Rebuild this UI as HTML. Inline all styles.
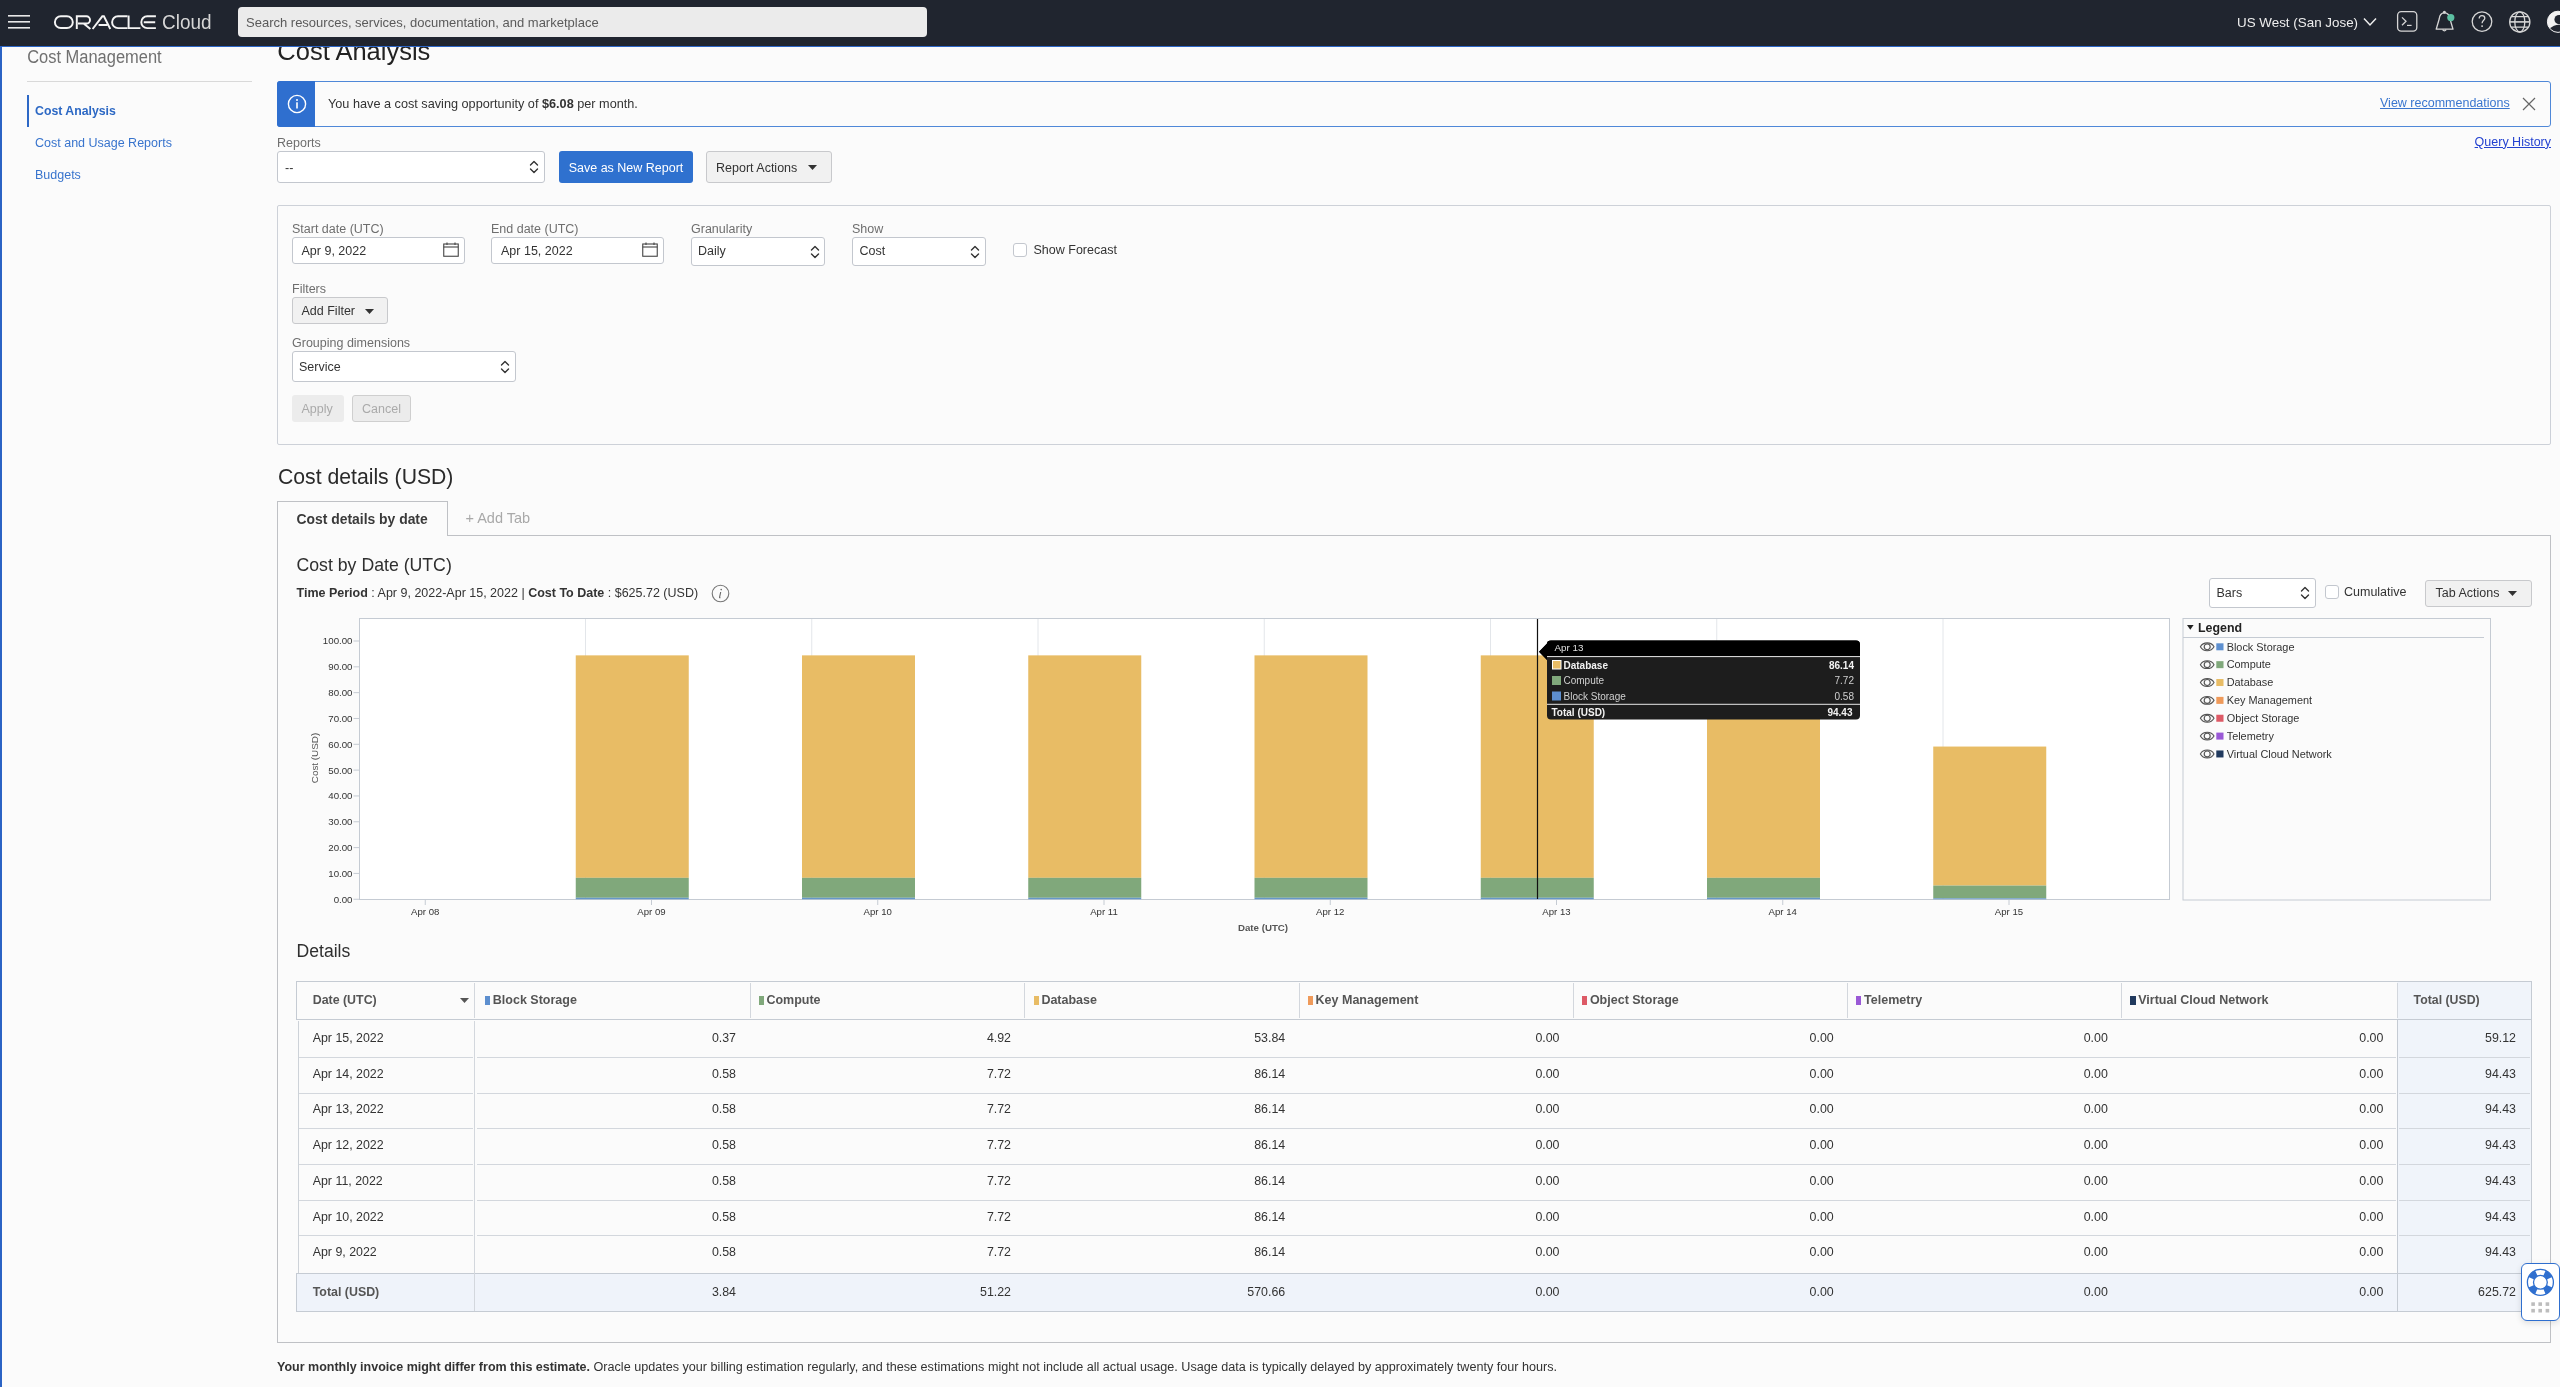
<!DOCTYPE html><html><head><meta charset="utf-8"><style>
*{box-sizing:border-box;margin:0;padding:0}
html,body{width:2560px;height:1387px;overflow:hidden;background:#fbfbfb;font-family:"Liberation Sans",sans-serif;color:#333;font-size:12.5px}
.a{position:absolute;white-space:nowrap;line-height:1}
.lbl{color:#6e6e6e;font-size:12.5px}
.box{position:absolute}
.inp{position:absolute;background:#fff;border:1px solid #c3c7ce;border-radius:3px}
.btn{position:absolute;background:#f1f1f1;border:1px solid #c8c9cc;border-radius:3px}
.t{position:absolute;white-space:nowrap;line-height:1}
#root{position:absolute;left:0;top:0;width:2560px;height:1387px;overflow:hidden;will-change:transform;background:#fbfbfb}
</style></head><body><div id="root">
<div class="t" style="left:277.3px;top:39.45px;font-size:25.5px;color:#222;font-weight:normal;">Cost Analysis</div>
<div class="box" style="left:0px;top:0px;width:2560px;height:46px;background:#20252f"></div>
<div class="box" style="left:0px;top:46px;width:2560px;height:1px;background:#2c66c6"></div>
<div class="box" style="left:0px;top:46px;width:2px;height:1341px;background:#2b63c4"></div>
<svg class="box" style="left:8px;top:15px" width="22" height="14" viewBox="0 0 22 14"><rect x="0" y="0" width="22" height="1.6" fill="#e8e8e8"/><rect x="0" y="6" width="22" height="1.6" fill="#e8e8e8"/><rect x="0" y="12" width="22" height="1.6" fill="#e8e8e8"/></svg>
<svg class="box" style="left:48px;top:8px" width="170" height="30" viewBox="48 8 170 30"><g fill="none" stroke="#f4f4f4" stroke-width="1.95" stroke-linejoin="miter"><rect x="54.9" y="16.3" width="17.9" height="11.8" rx="5.9"/><path d="M76.8 29 L76.8 16.3 L86.4 16.3 A3.6 3.6 0 0 1 86.4 23.5 L78 23.5 M83.6 23.5 L90.4 29"/><path d="M92.6 29 L102.3 16.3 L103.9 16.3 L110.3 29 M98.6 25 L107.3 25"/><path d="M127.5 16.3 L118 16.3 A5.9 5.9 0 0 0 118 28.1 L127.5 28.1"/><path d="M128.6 15.5 L128.6 28.1 L140.4 28.1"/><path d="M155.9 16.3 L147.2 16.3 A5.9 5.9 0 0 0 147.2 28.1 L155.9 28.1 M143.8 22.2 L155.2 22.2"/></g><text x="162" y="28.9" font-family="Liberation Sans" font-size="20" fill="#d6d6d6" textLength="49.5" lengthAdjust="spacingAndGlyphs">Cloud</text></svg>
<div class="box" style="left:238px;top:7px;width:689px;height:30px;background:#ebebeb;border-radius:4px"></div>
<div class="t" style="left:246px;top:15.50px;font-size:13px;color:#5a5a5a;font-weight:normal;">Search resources, services, documentation, and marketplace</div>
<div class="t" style="left:2237px;top:16.10px;font-size:13.4px;color:#eeeeee;font-weight:normal;">US West (San Jose)</div>
<svg class="box" style="left:2362px;top:16px" width="16" height="12" viewBox="0 0 16 12"><path d="M2 2.5 L8 9 L14 2.5" fill="none" stroke="#eee" stroke-width="1.5"/></svg>
<svg class="box" style="left:2390px;top:4px" width="170" height="36" viewBox="2390 4 170 36"><g fill="none" stroke="#d6d6d6" stroke-width="1.3"><rect x="2397.6" y="11.6" width="19.2" height="19.6" rx="3.6"/><path d="M2402 17.4 L2406 21.3 L2402 25.2"/><path d="M2407 25.4 L2411.6 25.4" stroke-width="1.2"/><path d="M2444.4 12.6 C2441 13 2439.5 15.5 2439.2 19 L2436.2 29.2 L2453 29.2 L2450 19 C2449.6 15.5 2447.8 13 2444.4 12.6 Z" stroke-linejoin="round"/><path d="M2442.6 29.6 Q2444.4 32 2446.2 29.6"/><circle cx="2444.4" cy="12.2" r="0.9"/><circle cx="2482" cy="21.6" r="9.8"/><path d="M2479.2 18.6 C2479.2 16.6 2480.5 15.6 2482 15.6 C2483.6 15.6 2484.8 16.7 2484.8 18.2 C2484.8 20.2 2482.1 20.4 2482.1 23.2"/><circle cx="2519.8" cy="21.9" r="10.1"/><ellipse cx="2519.8" cy="21.9" rx="5" ry="10.1"/><path d="M2509.7 21.9 L2529.9 21.9" stroke-width="1.6"/><path d="M2511.2 16.6 L2528.4 16.6 M2511.2 27.2 L2528.4 27.2"/></g><circle cx="2482.1" cy="26.1" r="0.95" fill="#d6d6d6"/><circle cx="2450.8" cy="17.6" r="3.6" fill="#5cc0a2"/><circle cx="2558" cy="21.8" r="10.6" fill="#f2f2f2"/><circle cx="2559" cy="19.6" r="4.6" fill="#20252f"/><path d="M2549 29 Q2559 20.5 2569 29 L2569 33 L2549 33 Z" fill="#20252f"/><circle cx="2558" cy="21.8" r="10.6" fill="none" stroke="#f2f2f2" stroke-width="1"/></svg>
<svg class="box" style="left:20px;top:44px" width="160" height="28" viewBox="20 44 160 28"><text x="27.2" y="62.8" font-family="Liberation Sans" font-size="17.6" fill="#707070" textLength="134.5" lengthAdjust="spacingAndGlyphs">Cost Management</text></svg>
<div class="box" style="left:27px;top:81px;width:225px;height:1px;background:#d9d9d9"></div>
<div class="box" style="left:27px;top:95px;width:2px;height:32px;background:#2d68c6"></div>
<div class="t" style="left:35px;top:104.85px;font-size:12.3px;color:#2c68c4;font-weight:bold;">Cost Analysis</div>
<div class="t" style="left:35px;top:137.05px;font-size:12.5px;color:#3874cd;font-weight:normal;">Cost and Usage Reports</div>
<div class="t" style="left:35px;top:169.05px;font-size:12.5px;color:#3874cd;font-weight:normal;">Budgets</div>
<div class="box" style="left:277px;top:81px;width:2274px;height:46px;border:1.5px solid #4f88d8;border-radius:3px"></div>
<div class="box" style="left:277px;top:81px;width:38px;height:46px;background:#2f6fcf;border-radius:3px 0 0 3px"></div>
<svg class="box" style="left:287px;top:94px" width="20" height="20" viewBox="0 0 20 20"><circle cx="10" cy="10" r="8.6" fill="none" stroke="#fff" stroke-width="1.4"/><rect x="9.2" y="8.3" width="1.6" height="6.2" fill="#fff"/><circle cx="10" cy="5.9" r="1" fill="#fff"/></svg>
<div class="t" style="left:328px;top:97.65px;font-size:12.7px;color:#333;font-weight:normal;">You have a cost saving opportunity of <b>$6.08</b> per month.</div>
<div class="t" style="left:2380px;top:97.25px;font-size:12.5px;color:#3a76cf;font-weight:normal;text-decoration:underline">View recommendations</div>
<svg class="box" style="left:2522px;top:97px" width="14" height="14" viewBox="0 0 14 14"><path d="M1 1 L13 13 M13 1 L1 13" stroke="#666" stroke-width="1.2"/></svg>
<div class="t" style="left:277px;top:137.05px;font-size:12.5px;color:#6e6e6e;font-weight:normal;">Reports</div>
<div class="t" style="right:9px;top:135.75px;font-size:12.5px;color:#2442d0;font-weight:normal;text-align:right;text-decoration:underline">Query History</div>
<div class="inp" style="left:277px;top:151px;width:268px;height:32px"></div>
<div class="t" style="left:285px;top:161.75px;font-size:12.5px;color:#333;font-weight:normal;">--</div>
<svg class="box" style="left:529px;top:160px" width="10" height="14" viewBox="0 0 10 14"><path d="M1.5 5 L5 1.5 L8.5 5 M1.5 9 L5 12.5 L8.5 9" fill="none" stroke="#333" stroke-width="1.4" stroke-linecap="round" stroke-linejoin="round"/></svg>
<div class="box" style="left:559px;top:151px;width:134px;height:32px;background:#2f71cf;border-radius:3px"></div>
<div class="t" style="left:568.7px;top:161.75px;font-size:12.5px;color:#fff;font-weight:normal;">Save as New Report</div>
<div class="btn" style="left:706px;top:151px;width:126px;height:32px"></div>
<div class="t" style="left:716px;top:161.75px;font-size:12.5px;color:#333;font-weight:normal;">Report Actions</div>
<svg class="box" style="left:808px;top:165px" width="9" height="5" viewBox="0 0 9 5"><path d="M0 0 L9 0 L4.5 5 Z" fill="#333"/></svg>
<div class="box" style="left:277px;top:205px;width:2274px;height:240px;border:1px solid #cdd1d8;border-radius:2px"></div>
<div class="t" style="left:292px;top:223.05px;font-size:12.5px;color:#6e6e6e;font-weight:normal;">Start date (UTC)</div>
<div class="t" style="left:491px;top:223.05px;font-size:12.5px;color:#6e6e6e;font-weight:normal;">End date (UTC)</div>
<div class="t" style="left:691px;top:223.05px;font-size:12.5px;color:#6e6e6e;font-weight:normal;">Granularity</div>
<div class="t" style="left:852px;top:223.05px;font-size:12.5px;color:#6e6e6e;font-weight:normal;">Show</div>
<div class="inp" style="left:292px;top:237px;width:173px;height:27px"></div>
<div class="t" style="left:301.5px;top:244.75px;font-size:12.5px;color:#333;font-weight:normal;">Apr 9, 2022</div>
<svg class="box" style="left:443px;top:242px" width="16" height="15" viewBox="0 0 16 15"><rect x="0.75" y="2" width="14.5" height="12.25" fill="none" stroke="#444" stroke-width="1.1"/><line x1="0.75" y1="5" x2="15.25" y2="5" stroke="#444" stroke-width="1.1"/><line x1="4" y1="0.5" x2="4" y2="3" stroke="#444" stroke-width="1.1"/><line x1="12" y1="0.5" x2="12" y2="3" stroke="#444" stroke-width="1.1"/></svg>
<div class="inp" style="left:491px;top:237px;width:173px;height:27px"></div>
<div class="t" style="left:501px;top:244.75px;font-size:12.5px;color:#333;font-weight:normal;">Apr 15, 2022</div>
<svg class="box" style="left:642px;top:242px" width="16" height="15" viewBox="0 0 16 15"><rect x="0.75" y="2" width="14.5" height="12.25" fill="none" stroke="#444" stroke-width="1.1"/><line x1="0.75" y1="5" x2="15.25" y2="5" stroke="#444" stroke-width="1.1"/><line x1="4" y1="0.5" x2="4" y2="3" stroke="#444" stroke-width="1.1"/><line x1="12" y1="0.5" x2="12" y2="3" stroke="#444" stroke-width="1.1"/></svg>
<div class="inp" style="left:691px;top:237px;width:134px;height:29px"></div>
<div class="t" style="left:698px;top:244.75px;font-size:12.5px;color:#333;font-weight:normal;">Daily</div>
<svg class="box" style="left:809.5px;top:245px" width="10" height="14" viewBox="0 0 10 14"><path d="M1.5 5 L5 1.5 L8.5 5 M1.5 9 L5 12.5 L8.5 9" fill="none" stroke="#333" stroke-width="1.4" stroke-linecap="round" stroke-linejoin="round"/></svg>
<div class="inp" style="left:852px;top:237px;width:134px;height:29px"></div>
<div class="t" style="left:859.5px;top:244.75px;font-size:12.5px;color:#333;font-weight:normal;">Cost</div>
<svg class="box" style="left:970px;top:245px" width="10" height="14" viewBox="0 0 10 14"><path d="M1.5 5 L5 1.5 L8.5 5 M1.5 9 L5 12.5 L8.5 9" fill="none" stroke="#333" stroke-width="1.4" stroke-linecap="round" stroke-linejoin="round"/></svg>
<div class="box" style="left:1013px;top:243px;width:14px;height:14px;border:1px solid #c3c7ce;border-radius:3px;background:#fff"></div>
<div class="t" style="left:1033.5px;top:243.75px;font-size:12.5px;color:#333;font-weight:normal;">Show Forecast</div>
<div class="t" style="left:292px;top:283.25px;font-size:12.5px;color:#6e6e6e;font-weight:normal;">Filters</div>
<div class="btn" style="left:292px;top:297px;width:96px;height:27px"></div>
<div class="t" style="left:301.5px;top:305.05px;font-size:12.5px;color:#333;font-weight:normal;">Add Filter</div>
<svg class="box" style="left:364.5px;top:308.5px" width="9" height="5" viewBox="0 0 9 5"><path d="M0 0 L9 0 L4.5 5 Z" fill="#333"/></svg>
<div class="t" style="left:292px;top:336.75px;font-size:12.5px;color:#6e6e6e;font-weight:normal;">Grouping dimensions</div>
<div class="inp" style="left:292px;top:351px;width:224px;height:31px"></div>
<div class="t" style="left:299px;top:360.75px;font-size:12.5px;color:#333;font-weight:normal;">Service</div>
<svg class="box" style="left:499.5px;top:359.5px" width="10" height="14" viewBox="0 0 10 14"><path d="M1.5 5 L5 1.5 L8.5 5 M1.5 9 L5 12.5 L8.5 9" fill="none" stroke="#333" stroke-width="1.4" stroke-linecap="round" stroke-linejoin="round"/></svg>
<div class="box" style="left:292px;top:395px;width:52px;height:27px;background:#ececec;border-radius:3px"></div>
<div class="t" style="left:301.5px;top:402.75px;font-size:12.5px;color:#aaaaaa;font-weight:normal;">Apply</div>
<div class="box" style="left:352px;top:395px;width:59px;height:27px;background:#ececec;border:1px solid #cfcfcf;border-radius:3px"></div>
<div class="t" style="left:362px;top:402.75px;font-size:12.5px;color:#aaaaaa;font-weight:normal;">Cancel</div>
<div class="t" style="left:278px;top:466.20px;font-size:21.2px;color:#2a2a2a;font-weight:normal;">Cost details (USD)</div>
<div class="box" style="left:277px;top:535px;width:2274px;height:808px;border:1px solid #bfc1c5;border-top:none"></div>
<div class="box" style="left:447px;top:535px;width:2104px;height:1px;background:#bfc1c5"></div>
<div class="box" style="left:277px;top:501px;width:171px;height:35px;border:1px solid #bfc1c5;border-bottom:none;background:#fbfbfb"></div>
<div class="t" style="left:296.5px;top:513.05px;font-size:13.9px;color:#3a3a3a;font-weight:bold;letter-spacing:0px">Cost details by date</div>
<div class="t" style="left:465.5px;top:510.75px;font-size:14.5px;color:#a9a9a9;font-weight:normal;">+ Add Tab</div>
<div class="t" style="left:296.5px;top:556.65px;font-size:17.7px;color:#2f2f2f;font-weight:normal;">Cost by Date (UTC)</div>
<div class="t" style="left:296.5px;top:586.75px;font-size:12.5px;color:#333;font-weight:normal;"><b>Time Period</b> : Apr 9, 2022-Apr 15, 2022 | <b>Cost To Date</b> : $625.72 (USD)</div>
<svg class="box" style="left:711px;top:584px" width="19" height="19" viewBox="0 0 19 19"><circle cx="9.5" cy="9.5" r="8.3" fill="none" stroke="#777" stroke-width="1.1"/><path d="M9.7 8 L8.6 13.2 Q8.5 14 9.4 13.6" fill="none" stroke="#666" stroke-width="1.1"/><circle cx="10.2" cy="5.6" r="0.8" fill="#666"/></svg>
<div class="inp" style="left:2209px;top:578px;width:107px;height:30px"></div>
<div class="t" style="left:2216.5px;top:586.75px;font-size:12.5px;color:#333;font-weight:normal;">Bars</div>
<svg class="box" style="left:2299.5px;top:585.5px" width="10" height="14" viewBox="0 0 10 14"><path d="M1.5 5 L5 1.5 L8.5 5 M1.5 9 L5 12.5 L8.5 9" fill="none" stroke="#333" stroke-width="1.4" stroke-linecap="round" stroke-linejoin="round"/></svg>
<div class="box" style="left:2325px;top:585px;width:14px;height:14px;border:1px solid #c3c7ce;border-radius:3px;background:#fff"></div>
<div class="t" style="left:2344px;top:586.25px;font-size:12.5px;color:#333;font-weight:normal;">Cumulative</div>
<div class="btn" style="left:2425px;top:580px;width:107px;height:27px"></div>
<div class="t" style="left:2435.5px;top:586.75px;font-size:12.5px;color:#333;font-weight:normal;">Tab Actions</div>
<svg class="box" style="left:2508px;top:591px" width="9" height="5" viewBox="0 0 9 5"><path d="M0 0 L9 0 L4.5 5 Z" fill="#333"/></svg>
<svg class="box" style="left:0;top:0" width="2560" height="1387" viewBox="0 0 2560 1387">
<rect x="359.5" y="618.5" width="1810" height="281" fill="#fff" stroke="#c5cbd3" stroke-width="1"/>
<line x1="585.50" y1="619" x2="585.50" y2="899" stroke="#e3e6ea" stroke-width="1"/>
<line x1="811.75" y1="619" x2="811.75" y2="899" stroke="#e3e6ea" stroke-width="1"/>
<line x1="1038.00" y1="619" x2="1038.00" y2="899" stroke="#e3e6ea" stroke-width="1"/>
<line x1="1264.25" y1="619" x2="1264.25" y2="899" stroke="#e3e6ea" stroke-width="1"/>
<line x1="1490.50" y1="619" x2="1490.50" y2="899" stroke="#e3e6ea" stroke-width="1"/>
<line x1="1716.75" y1="619" x2="1716.75" y2="899" stroke="#e3e6ea" stroke-width="1"/>
<line x1="1943.00" y1="619" x2="1943.00" y2="899" stroke="#e3e6ea" stroke-width="1"/>
<line x1="353.5" y1="899.25" x2="359.5" y2="899.25" stroke="#c5cbd3" stroke-width="1"/>
<text x="352.5" y="902.65" text-anchor="end" font-family="Liberation Sans" font-size="9.7" fill="#333">0.00</text>
<line x1="353.5" y1="873.42" x2="359.5" y2="873.42" stroke="#c5cbd3" stroke-width="1"/>
<text x="352.5" y="876.82" text-anchor="end" font-family="Liberation Sans" font-size="9.7" fill="#333">10.00</text>
<line x1="353.5" y1="847.60" x2="359.5" y2="847.60" stroke="#c5cbd3" stroke-width="1"/>
<text x="352.5" y="851.00" text-anchor="end" font-family="Liberation Sans" font-size="9.7" fill="#333">20.00</text>
<line x1="353.5" y1="821.77" x2="359.5" y2="821.77" stroke="#c5cbd3" stroke-width="1"/>
<text x="352.5" y="825.17" text-anchor="end" font-family="Liberation Sans" font-size="9.7" fill="#333">30.00</text>
<line x1="353.5" y1="795.95" x2="359.5" y2="795.95" stroke="#c5cbd3" stroke-width="1"/>
<text x="352.5" y="799.35" text-anchor="end" font-family="Liberation Sans" font-size="9.7" fill="#333">40.00</text>
<line x1="353.5" y1="770.12" x2="359.5" y2="770.12" stroke="#c5cbd3" stroke-width="1"/>
<text x="352.5" y="773.52" text-anchor="end" font-family="Liberation Sans" font-size="9.7" fill="#333">50.00</text>
<line x1="353.5" y1="744.30" x2="359.5" y2="744.30" stroke="#c5cbd3" stroke-width="1"/>
<text x="352.5" y="747.70" text-anchor="end" font-family="Liberation Sans" font-size="9.7" fill="#333">60.00</text>
<line x1="353.5" y1="718.48" x2="359.5" y2="718.48" stroke="#c5cbd3" stroke-width="1"/>
<text x="352.5" y="721.88" text-anchor="end" font-family="Liberation Sans" font-size="9.7" fill="#333">70.00</text>
<line x1="353.5" y1="692.65" x2="359.5" y2="692.65" stroke="#c5cbd3" stroke-width="1"/>
<text x="352.5" y="696.05" text-anchor="end" font-family="Liberation Sans" font-size="9.7" fill="#333">80.00</text>
<line x1="353.5" y1="666.83" x2="359.5" y2="666.83" stroke="#c5cbd3" stroke-width="1"/>
<text x="352.5" y="670.23" text-anchor="end" font-family="Liberation Sans" font-size="9.7" fill="#333">90.00</text>
<line x1="353.5" y1="641.00" x2="359.5" y2="641.00" stroke="#c5cbd3" stroke-width="1"/>
<text x="352.5" y="644.40" text-anchor="end" font-family="Liberation Sans" font-size="9.7" fill="#333">100.00</text>
<text transform="translate(317.6,758) rotate(-90)" text-anchor="middle" font-family="Liberation Sans" font-size="9.9" fill="#555">Cost (USD)</text>
<line x1="425.25" y1="899.5" x2="425.25" y2="905" stroke="#c5cbd3" stroke-width="1"/>
<text x="425.25" y="914.5" text-anchor="middle" font-family="Liberation Sans" font-size="9.6" fill="#333">Apr 08</text>
<line x1="651.50" y1="899.5" x2="651.50" y2="905" stroke="#c5cbd3" stroke-width="1"/>
<text x="651.50" y="914.5" text-anchor="middle" font-family="Liberation Sans" font-size="9.6" fill="#333">Apr 09</text>
<line x1="877.75" y1="899.5" x2="877.75" y2="905" stroke="#c5cbd3" stroke-width="1"/>
<text x="877.75" y="914.5" text-anchor="middle" font-family="Liberation Sans" font-size="9.6" fill="#333">Apr 10</text>
<line x1="1104.00" y1="899.5" x2="1104.00" y2="905" stroke="#c5cbd3" stroke-width="1"/>
<text x="1104.00" y="914.5" text-anchor="middle" font-family="Liberation Sans" font-size="9.6" fill="#333">Apr 11</text>
<line x1="1330.25" y1="899.5" x2="1330.25" y2="905" stroke="#c5cbd3" stroke-width="1"/>
<text x="1330.25" y="914.5" text-anchor="middle" font-family="Liberation Sans" font-size="9.6" fill="#333">Apr 12</text>
<line x1="1556.50" y1="899.5" x2="1556.50" y2="905" stroke="#c5cbd3" stroke-width="1"/>
<text x="1556.50" y="914.5" text-anchor="middle" font-family="Liberation Sans" font-size="9.6" fill="#333">Apr 13</text>
<line x1="1782.75" y1="899.5" x2="1782.75" y2="905" stroke="#c5cbd3" stroke-width="1"/>
<text x="1782.75" y="914.5" text-anchor="middle" font-family="Liberation Sans" font-size="9.6" fill="#333">Apr 14</text>
<line x1="2009.00" y1="899.5" x2="2009.00" y2="905" stroke="#c5cbd3" stroke-width="1"/>
<text x="2009.00" y="914.5" text-anchor="middle" font-family="Liberation Sans" font-size="9.6" fill="#333">Apr 15</text>
<text x="1263" y="930.5" text-anchor="middle" font-family="Liberation Sans" font-size="9.7" font-weight="bold" fill="#555">Date (UTC)</text>
<rect x="575.75" y="655.36" width="113" height="222.46" fill="#e8bc65"/>
<rect x="575.75" y="877.82" width="113" height="19.94" fill="#80a87b"/>
<rect x="575.75" y="897.75" width="113" height="1.50" fill="#6597c8"/>
<rect x="802.00" y="655.36" width="113" height="222.46" fill="#e8bc65"/>
<rect x="802.00" y="877.82" width="113" height="19.94" fill="#80a87b"/>
<rect x="802.00" y="897.75" width="113" height="1.50" fill="#6597c8"/>
<rect x="1028.25" y="655.36" width="113" height="222.46" fill="#e8bc65"/>
<rect x="1028.25" y="877.82" width="113" height="19.94" fill="#80a87b"/>
<rect x="1028.25" y="897.75" width="113" height="1.50" fill="#6597c8"/>
<rect x="1254.50" y="655.36" width="113" height="222.46" fill="#e8bc65"/>
<rect x="1254.50" y="877.82" width="113" height="19.94" fill="#80a87b"/>
<rect x="1254.50" y="897.75" width="113" height="1.50" fill="#6597c8"/>
<rect x="1480.75" y="655.36" width="113" height="222.46" fill="#e8bc65"/>
<rect x="1480.75" y="877.82" width="113" height="19.94" fill="#80a87b"/>
<rect x="1480.75" y="897.75" width="113" height="1.50" fill="#6597c8"/>
<rect x="1707.00" y="655.36" width="113" height="222.46" fill="#e8bc65"/>
<rect x="1707.00" y="877.82" width="113" height="19.94" fill="#80a87b"/>
<rect x="1707.00" y="897.75" width="113" height="1.50" fill="#6597c8"/>
<rect x="1933.25" y="746.55" width="113" height="139.04" fill="#e8bc65"/>
<rect x="1933.25" y="885.59" width="113" height="12.71" fill="#80a87b"/>
<rect x="1933.25" y="898.29" width="113" height="0.96" fill="#6597c8"/>
<line x1="1537.5" y1="619" x2="1537.5" y2="899" stroke="#111" stroke-width="1.2"/>
<path d="M1551 640.5 L1856 640.5 Q1860 640.5 1860 644.5 L1860 715.5 Q1860 719.5 1856 719.5 L1551 719.5 Q1547 719.5 1547 715.5 L1547 660 L1539 651.8 L1547 643.5 Q1547 640.5 1551 640.5 Z" fill="#1d1d1d"/>
<path d="M1551 640.5 L1856 640.5 Q1860 640.5 1860 644.5 L1860 656 L1547 656 L1547 660 L1539 651.8 L1547 643.5 Q1547 640.5 1551 640.5 Z" fill="#000"/>
<line x1="1547" y1="656.6" x2="1860" y2="656.6" stroke="#e8e8e8" stroke-width="1"/>
<line x1="1547" y1="704.3" x2="1860" y2="704.3" stroke="#e8e8e8" stroke-width="1"/>
<text x="1554.5" y="651.3" font-family="Liberation Sans" font-size="9.8" fill="#e0e0e0">Apr 13</text>
<rect x="1552.5" y="660.5" width="8.5" height="8.5" fill="#e8bc65" stroke="#fff" stroke-width="1"/>
<text x="1563.5" y="668.5" font-family="Liberation Sans" font-size="10" font-weight="bold" fill="#f2f2f2">Database</text>
<text x="1854" y="668.5" text-anchor="end" font-family="Liberation Sans" font-size="10" font-weight="bold" fill="#f2f2f2">86.14</text>
<rect x="1552" y="676" width="9" height="9" fill="#80a87b"/>
<text x="1563.5" y="684" font-family="Liberation Sans" font-size="10" fill="#d0d0d0">Compute</text>
<text x="1854" y="684" text-anchor="end" font-family="Liberation Sans" font-size="10" fill="#d0d0d0">7.72</text>
<rect x="1552" y="691.5" width="9" height="9" fill="#5d8fcf"/>
<text x="1563.5" y="699.6" font-family="Liberation Sans" font-size="10" fill="#d0d0d0">Block Storage</text>
<text x="1854" y="699.6" text-anchor="end" font-family="Liberation Sans" font-size="10" fill="#d0d0d0">0.58</text>
<text x="1551.5" y="715.8" font-family="Liberation Sans" font-size="10" font-weight="bold" fill="#f2f2f2">Total (USD)</text>
<text x="1852.5" y="715.8" text-anchor="end" font-family="Liberation Sans" font-size="10" font-weight="bold" fill="#f2f2f2">94.43</text>
<rect x="2183" y="618.5" width="307.5" height="281.5" fill="#fbfbfb" stroke="#c5cbd3" stroke-width="1"/>
<path d="M2187 625 L2193.6 625 L2190.3 629.8 Z" fill="#222"/>
<text x="2198" y="631.8" font-family="Liberation Sans" font-size="12.4" font-weight="bold" fill="#222">Legend</text>
<line x1="2183" y1="637.5" x2="2484" y2="637.5" stroke="#c5cbd3" stroke-width="1"/>
<g transform="translate(2207.2,646.80)"><path d="M-6.8 0 C-4 -5.2 4 -5.2 6.8 0 C4 5.2 -4 5.2 -6.8 0 Z" fill="none" stroke="#555" stroke-width="1.1"/><circle cx="0" cy="0" r="3" fill="none" stroke="#555" stroke-width="1.2"/></g>
<rect x="2216.3" y="643.30" width="7.2" height="7" fill="#5d8fcf"/>
<text x="2226.7" y="650.60" font-family="Liberation Sans" font-size="10.9" fill="#333">Block Storage</text>
<g transform="translate(2207.2,664.66)"><path d="M-6.8 0 C-4 -5.2 4 -5.2 6.8 0 C4 5.2 -4 5.2 -6.8 0 Z" fill="none" stroke="#555" stroke-width="1.1"/><circle cx="0" cy="0" r="3" fill="none" stroke="#555" stroke-width="1.2"/></g>
<rect x="2216.3" y="661.16" width="7.2" height="7" fill="#80a87b"/>
<text x="2226.7" y="668.46" font-family="Liberation Sans" font-size="10.9" fill="#333">Compute</text>
<g transform="translate(2207.2,682.52)"><path d="M-6.8 0 C-4 -5.2 4 -5.2 6.8 0 C4 5.2 -4 5.2 -6.8 0 Z" fill="none" stroke="#555" stroke-width="1.1"/><circle cx="0" cy="0" r="3" fill="none" stroke="#555" stroke-width="1.2"/></g>
<rect x="2216.3" y="679.02" width="7.2" height="7" fill="#e8bc65"/>
<text x="2226.7" y="686.32" font-family="Liberation Sans" font-size="10.9" fill="#333">Database</text>
<g transform="translate(2207.2,700.38)"><path d="M-6.8 0 C-4 -5.2 4 -5.2 6.8 0 C4 5.2 -4 5.2 -6.8 0 Z" fill="none" stroke="#555" stroke-width="1.1"/><circle cx="0" cy="0" r="3" fill="none" stroke="#555" stroke-width="1.2"/></g>
<rect x="2216.3" y="696.88" width="7.2" height="7" fill="#ef9a5a"/>
<text x="2226.7" y="704.18" font-family="Liberation Sans" font-size="10.9" fill="#333">Key Management</text>
<g transform="translate(2207.2,718.24)"><path d="M-6.8 0 C-4 -5.2 4 -5.2 6.8 0 C4 5.2 -4 5.2 -6.8 0 Z" fill="none" stroke="#555" stroke-width="1.1"/><circle cx="0" cy="0" r="3" fill="none" stroke="#555" stroke-width="1.2"/></g>
<rect x="2216.3" y="714.74" width="7.2" height="7" fill="#dd5a66"/>
<text x="2226.7" y="722.04" font-family="Liberation Sans" font-size="10.9" fill="#333">Object Storage</text>
<g transform="translate(2207.2,736.10)"><path d="M-6.8 0 C-4 -5.2 4 -5.2 6.8 0 C4 5.2 -4 5.2 -6.8 0 Z" fill="none" stroke="#555" stroke-width="1.1"/><circle cx="0" cy="0" r="3" fill="none" stroke="#555" stroke-width="1.2"/></g>
<rect x="2216.3" y="732.60" width="7.2" height="7" fill="#9a59d6"/>
<text x="2226.7" y="739.90" font-family="Liberation Sans" font-size="10.9" fill="#333">Telemetry</text>
<g transform="translate(2207.2,753.96)"><path d="M-6.8 0 C-4 -5.2 4 -5.2 6.8 0 C4 5.2 -4 5.2 -6.8 0 Z" fill="none" stroke="#555" stroke-width="1.1"/><circle cx="0" cy="0" r="3" fill="none" stroke="#555" stroke-width="1.2"/></g>
<rect x="2216.3" y="750.46" width="7.2" height="7" fill="#213a5e"/>
<text x="2226.7" y="757.76" font-family="Liberation Sans" font-size="10.9" fill="#333">Virtual Cloud Network</text>
</svg>
<div class="t" style="left:296.5px;top:942.70px;font-size:17.6px;color:#2f2f2f;font-weight:normal;">Details</div>
<div class="box" style="left:2397px;top:981px;width:135px;height:292px;background:#f0f4fa"></div>
<div class="box" style="left:296px;top:1273px;width:2236px;height:38px;background:#eff3fa"></div>
<div class="box" style="left:296px;top:981px;width:2236px;height:38.5px;border:1px solid #c5cbd3"></div>
<div class="box" style="left:296px;top:1272.5px;width:2236px;height:39px;border:1px solid #c5cbd3"></div>
<div class="box" style="left:298px;top:1021px;width:1px;height:252px;background:#cdd2d8"></div>
<div class="box" style="left:474px;top:983px;width:1px;height:35px;background:#d3d7dd"></div>
<div class="box" style="left:750px;top:983px;width:1px;height:35px;background:#d3d7dd"></div>
<div class="box" style="left:1024px;top:983px;width:1px;height:35px;background:#d3d7dd"></div>
<div class="box" style="left:1299px;top:983px;width:1px;height:35px;background:#d3d7dd"></div>
<div class="box" style="left:1573px;top:983px;width:1px;height:35px;background:#d3d7dd"></div>
<div class="box" style="left:1847px;top:983px;width:1px;height:35px;background:#d3d7dd"></div>
<div class="box" style="left:2121px;top:983px;width:1px;height:35px;background:#d3d7dd"></div>
<div class="box" style="left:2397px;top:983px;width:1px;height:35px;background:#d3d7dd"></div>
<div class="box" style="left:474px;top:1021px;width:1px;height:290px;background:#d3d7dd"></div>
<div class="box" style="left:2397px;top:1019px;width:1px;height:292px;background:#c5cbd3"></div>
<div class="box" style="left:2531px;top:1019px;width:1px;height:254px;background:#c5cbd3"></div>
<div class="box" style="left:299px;top:1057px;width:174px;height:1.3px;background:#d3d7dd"></div>
<div class="box" style="left:477px;top:1057px;width:1919px;height:1.3px;background:#d3d7dd"></div>
<div class="box" style="left:2399px;top:1057px;width:131px;height:1.3px;background:#d3d7dd"></div>
<div class="box" style="left:299px;top:1093px;width:174px;height:1.3px;background:#d3d7dd"></div>
<div class="box" style="left:477px;top:1093px;width:1919px;height:1.3px;background:#d3d7dd"></div>
<div class="box" style="left:2399px;top:1093px;width:131px;height:1.3px;background:#d3d7dd"></div>
<div class="box" style="left:299px;top:1128px;width:174px;height:1.3px;background:#d3d7dd"></div>
<div class="box" style="left:477px;top:1128px;width:1919px;height:1.3px;background:#d3d7dd"></div>
<div class="box" style="left:2399px;top:1128px;width:131px;height:1.3px;background:#d3d7dd"></div>
<div class="box" style="left:299px;top:1164px;width:174px;height:1.3px;background:#d3d7dd"></div>
<div class="box" style="left:477px;top:1164px;width:1919px;height:1.3px;background:#d3d7dd"></div>
<div class="box" style="left:2399px;top:1164px;width:131px;height:1.3px;background:#d3d7dd"></div>
<div class="box" style="left:299px;top:1200px;width:174px;height:1.3px;background:#d3d7dd"></div>
<div class="box" style="left:477px;top:1200px;width:1919px;height:1.3px;background:#d3d7dd"></div>
<div class="box" style="left:2399px;top:1200px;width:131px;height:1.3px;background:#d3d7dd"></div>
<div class="box" style="left:299px;top:1235px;width:174px;height:1.3px;background:#d3d7dd"></div>
<div class="box" style="left:477px;top:1235px;width:1919px;height:1.3px;background:#d3d7dd"></div>
<div class="box" style="left:2399px;top:1235px;width:131px;height:1.3px;background:#d3d7dd"></div>
<div class="t" style="left:312.7px;top:993.80px;font-size:12.4px;color:#555;font-weight:bold;">Date (UTC)</div>
<svg class="box" style="left:460.3px;top:998.4px" width="9" height="5" viewBox="0 0 9 5"><path d="M0 0 L9 0 L4.5 5 Z" fill="#555"/></svg>
<div class="box" style="left:485.00px;top:996.2px;width:5.2px;height:8.6px;background:#5d8fcf"></div>
<div class="t" style="left:492.8px;top:994.25px;font-size:12.5px;color:#555;font-weight:bold;">Block Storage</div>
<div class="box" style="left:758.60px;top:996.2px;width:5.2px;height:8.6px;background:#80a87b"></div>
<div class="t" style="left:766.4px;top:994.25px;font-size:12.5px;color:#555;font-weight:bold;">Compute</div>
<div class="box" style="left:1033.60px;top:996.2px;width:5.2px;height:8.6px;background:#e8bc65"></div>
<div class="t" style="left:1041.3999999999999px;top:994.25px;font-size:12.5px;color:#555;font-weight:bold;">Database</div>
<div class="box" style="left:1307.80px;top:996.2px;width:5.2px;height:8.6px;background:#ef9a5a"></div>
<div class="t" style="left:1315.6px;top:994.25px;font-size:12.5px;color:#555;font-weight:bold;">Key Management</div>
<div class="box" style="left:1582.10px;top:996.2px;width:5.2px;height:8.6px;background:#dd5a66"></div>
<div class="t" style="left:1589.8999999999999px;top:994.25px;font-size:12.5px;color:#555;font-weight:bold;">Object Storage</div>
<div class="box" style="left:1856.30px;top:996.2px;width:5.2px;height:8.6px;background:#9a59d6"></div>
<div class="t" style="left:1864.1px;top:994.25px;font-size:12.5px;color:#555;font-weight:bold;">Telemetry</div>
<div class="box" style="left:2130.40px;top:996.2px;width:5.2px;height:8.6px;background:#213a5e"></div>
<div class="t" style="left:2138.2000000000003px;top:994.25px;font-size:12.5px;color:#555;font-weight:bold;">Virtual Cloud Network</div>
<div class="t" style="left:2413.6px;top:994.35px;font-size:12.3px;color:#555;font-weight:bold;">Total (USD)</div>
<div class="t" style="left:312.7px;top:1032.00px;font-size:12.4px;color:#333;font-weight:normal;">Apr 15, 2022</div>
<div class="t" style="right:1824.0px;top:1032.00px;font-size:12.4px;color:#333;font-weight:normal;text-align:right;">0.37</div>
<div class="t" style="right:1549.0px;top:1032.00px;font-size:12.4px;color:#333;font-weight:normal;text-align:right;">4.92</div>
<div class="t" style="right:1274.8px;top:1032.00px;font-size:12.4px;color:#333;font-weight:normal;text-align:right;">53.84</div>
<div class="t" style="right:1000.5px;top:1032.00px;font-size:12.4px;color:#333;font-weight:normal;text-align:right;">0.00</div>
<div class="t" style="right:726.3px;top:1032.00px;font-size:12.4px;color:#333;font-weight:normal;text-align:right;">0.00</div>
<div class="t" style="right:452.1999999999998px;top:1032.00px;font-size:12.4px;color:#333;font-weight:normal;text-align:right;">0.00</div>
<div class="t" style="right:176.5999999999999px;top:1032.00px;font-size:12.4px;color:#333;font-weight:normal;text-align:right;">0.00</div>
<div class="t" style="right:44px;top:1032.00px;font-size:12.4px;color:#333;font-weight:normal;text-align:right;">59.12</div>
<div class="t" style="left:312.7px;top:1067.70px;font-size:12.4px;color:#333;font-weight:normal;">Apr 14, 2022</div>
<div class="t" style="right:1824.0px;top:1067.70px;font-size:12.4px;color:#333;font-weight:normal;text-align:right;">0.58</div>
<div class="t" style="right:1549.0px;top:1067.70px;font-size:12.4px;color:#333;font-weight:normal;text-align:right;">7.72</div>
<div class="t" style="right:1274.8px;top:1067.70px;font-size:12.4px;color:#333;font-weight:normal;text-align:right;">86.14</div>
<div class="t" style="right:1000.5px;top:1067.70px;font-size:12.4px;color:#333;font-weight:normal;text-align:right;">0.00</div>
<div class="t" style="right:726.3px;top:1067.70px;font-size:12.4px;color:#333;font-weight:normal;text-align:right;">0.00</div>
<div class="t" style="right:452.1999999999998px;top:1067.70px;font-size:12.4px;color:#333;font-weight:normal;text-align:right;">0.00</div>
<div class="t" style="right:176.5999999999999px;top:1067.70px;font-size:12.4px;color:#333;font-weight:normal;text-align:right;">0.00</div>
<div class="t" style="right:44px;top:1067.70px;font-size:12.4px;color:#333;font-weight:normal;text-align:right;">94.43</div>
<div class="t" style="left:312.7px;top:1103.40px;font-size:12.4px;color:#333;font-weight:normal;">Apr 13, 2022</div>
<div class="t" style="right:1824.0px;top:1103.40px;font-size:12.4px;color:#333;font-weight:normal;text-align:right;">0.58</div>
<div class="t" style="right:1549.0px;top:1103.40px;font-size:12.4px;color:#333;font-weight:normal;text-align:right;">7.72</div>
<div class="t" style="right:1274.8px;top:1103.40px;font-size:12.4px;color:#333;font-weight:normal;text-align:right;">86.14</div>
<div class="t" style="right:1000.5px;top:1103.40px;font-size:12.4px;color:#333;font-weight:normal;text-align:right;">0.00</div>
<div class="t" style="right:726.3px;top:1103.40px;font-size:12.4px;color:#333;font-weight:normal;text-align:right;">0.00</div>
<div class="t" style="right:452.1999999999998px;top:1103.40px;font-size:12.4px;color:#333;font-weight:normal;text-align:right;">0.00</div>
<div class="t" style="right:176.5999999999999px;top:1103.40px;font-size:12.4px;color:#333;font-weight:normal;text-align:right;">0.00</div>
<div class="t" style="right:44px;top:1103.40px;font-size:12.4px;color:#333;font-weight:normal;text-align:right;">94.43</div>
<div class="t" style="left:312.7px;top:1139.10px;font-size:12.4px;color:#333;font-weight:normal;">Apr 12, 2022</div>
<div class="t" style="right:1824.0px;top:1139.10px;font-size:12.4px;color:#333;font-weight:normal;text-align:right;">0.58</div>
<div class="t" style="right:1549.0px;top:1139.10px;font-size:12.4px;color:#333;font-weight:normal;text-align:right;">7.72</div>
<div class="t" style="right:1274.8px;top:1139.10px;font-size:12.4px;color:#333;font-weight:normal;text-align:right;">86.14</div>
<div class="t" style="right:1000.5px;top:1139.10px;font-size:12.4px;color:#333;font-weight:normal;text-align:right;">0.00</div>
<div class="t" style="right:726.3px;top:1139.10px;font-size:12.4px;color:#333;font-weight:normal;text-align:right;">0.00</div>
<div class="t" style="right:452.1999999999998px;top:1139.10px;font-size:12.4px;color:#333;font-weight:normal;text-align:right;">0.00</div>
<div class="t" style="right:176.5999999999999px;top:1139.10px;font-size:12.4px;color:#333;font-weight:normal;text-align:right;">0.00</div>
<div class="t" style="right:44px;top:1139.10px;font-size:12.4px;color:#333;font-weight:normal;text-align:right;">94.43</div>
<div class="t" style="left:312.7px;top:1174.80px;font-size:12.4px;color:#333;font-weight:normal;">Apr 11, 2022</div>
<div class="t" style="right:1824.0px;top:1174.80px;font-size:12.4px;color:#333;font-weight:normal;text-align:right;">0.58</div>
<div class="t" style="right:1549.0px;top:1174.80px;font-size:12.4px;color:#333;font-weight:normal;text-align:right;">7.72</div>
<div class="t" style="right:1274.8px;top:1174.80px;font-size:12.4px;color:#333;font-weight:normal;text-align:right;">86.14</div>
<div class="t" style="right:1000.5px;top:1174.80px;font-size:12.4px;color:#333;font-weight:normal;text-align:right;">0.00</div>
<div class="t" style="right:726.3px;top:1174.80px;font-size:12.4px;color:#333;font-weight:normal;text-align:right;">0.00</div>
<div class="t" style="right:452.1999999999998px;top:1174.80px;font-size:12.4px;color:#333;font-weight:normal;text-align:right;">0.00</div>
<div class="t" style="right:176.5999999999999px;top:1174.80px;font-size:12.4px;color:#333;font-weight:normal;text-align:right;">0.00</div>
<div class="t" style="right:44px;top:1174.80px;font-size:12.4px;color:#333;font-weight:normal;text-align:right;">94.43</div>
<div class="t" style="left:312.7px;top:1210.50px;font-size:12.4px;color:#333;font-weight:normal;">Apr 10, 2022</div>
<div class="t" style="right:1824.0px;top:1210.50px;font-size:12.4px;color:#333;font-weight:normal;text-align:right;">0.58</div>
<div class="t" style="right:1549.0px;top:1210.50px;font-size:12.4px;color:#333;font-weight:normal;text-align:right;">7.72</div>
<div class="t" style="right:1274.8px;top:1210.50px;font-size:12.4px;color:#333;font-weight:normal;text-align:right;">86.14</div>
<div class="t" style="right:1000.5px;top:1210.50px;font-size:12.4px;color:#333;font-weight:normal;text-align:right;">0.00</div>
<div class="t" style="right:726.3px;top:1210.50px;font-size:12.4px;color:#333;font-weight:normal;text-align:right;">0.00</div>
<div class="t" style="right:452.1999999999998px;top:1210.50px;font-size:12.4px;color:#333;font-weight:normal;text-align:right;">0.00</div>
<div class="t" style="right:176.5999999999999px;top:1210.50px;font-size:12.4px;color:#333;font-weight:normal;text-align:right;">0.00</div>
<div class="t" style="right:44px;top:1210.50px;font-size:12.4px;color:#333;font-weight:normal;text-align:right;">94.43</div>
<div class="t" style="left:312.7px;top:1246.20px;font-size:12.4px;color:#333;font-weight:normal;">Apr 9, 2022</div>
<div class="t" style="right:1824.0px;top:1246.20px;font-size:12.4px;color:#333;font-weight:normal;text-align:right;">0.58</div>
<div class="t" style="right:1549.0px;top:1246.20px;font-size:12.4px;color:#333;font-weight:normal;text-align:right;">7.72</div>
<div class="t" style="right:1274.8px;top:1246.20px;font-size:12.4px;color:#333;font-weight:normal;text-align:right;">86.14</div>
<div class="t" style="right:1000.5px;top:1246.20px;font-size:12.4px;color:#333;font-weight:normal;text-align:right;">0.00</div>
<div class="t" style="right:726.3px;top:1246.20px;font-size:12.4px;color:#333;font-weight:normal;text-align:right;">0.00</div>
<div class="t" style="right:452.1999999999998px;top:1246.20px;font-size:12.4px;color:#333;font-weight:normal;text-align:right;">0.00</div>
<div class="t" style="right:176.5999999999999px;top:1246.20px;font-size:12.4px;color:#333;font-weight:normal;text-align:right;">0.00</div>
<div class="t" style="right:44px;top:1246.20px;font-size:12.4px;color:#333;font-weight:normal;text-align:right;">94.43</div>
<div class="t" style="left:312.7px;top:1285.80px;font-size:12.4px;color:#555;font-weight:bold;">Total (USD)</div>
<div class="t" style="right:1824.0px;top:1285.80px;font-size:12.4px;color:#333;font-weight:normal;text-align:right;">3.84</div>
<div class="t" style="right:1549.0px;top:1285.80px;font-size:12.4px;color:#333;font-weight:normal;text-align:right;">51.22</div>
<div class="t" style="right:1274.8px;top:1285.80px;font-size:12.4px;color:#333;font-weight:normal;text-align:right;">570.66</div>
<div class="t" style="right:1000.5px;top:1285.80px;font-size:12.4px;color:#333;font-weight:normal;text-align:right;">0.00</div>
<div class="t" style="right:726.3px;top:1285.80px;font-size:12.4px;color:#333;font-weight:normal;text-align:right;">0.00</div>
<div class="t" style="right:452.1999999999998px;top:1285.80px;font-size:12.4px;color:#333;font-weight:normal;text-align:right;">0.00</div>
<div class="t" style="right:176.5999999999999px;top:1285.80px;font-size:12.4px;color:#333;font-weight:normal;text-align:right;">0.00</div>
<div class="t" style="right:44px;top:1285.80px;font-size:12.4px;color:#333;font-weight:normal;text-align:right;">625.72</div>
<div class="t" style="left:277px;top:1360.69px;font-size:12.62px;color:#333;font-weight:normal;"><b style="font-size:12.5px">Your monthly invoice might differ from this estimate.</b> Oracle updates your billing estimation regularly, and these estimations might not include all actual usage. Usage data is typically delayed by approximately twenty four hours.</div>
<div class="box" style="left:2521px;top:1262.5px;width:38.5px;height:58px;border:1.8px solid #2f6fcf;border-radius:6px;background:#fff;box-shadow:0 2px 6px rgba(0,0,0,0.12)"></div>
<svg class="box" style="left:2521px;top:1262px" width="39" height="59" viewBox="2521 1262 39 59"><circle cx="2540.4" cy="1282.3" r="13.0" fill="none" stroke="#2f6fcf" stroke-width="1.3"/><circle cx="2540.4" cy="1282.3" r="6.9" fill="none" stroke="#2f6fcf" stroke-width="1.3"/><path d="M2552.28 1287.59 A13.0 13.0 0 0 1 2545.69 1294.18 L2543.21 1288.60 A6.9 6.9 0 0 0 2546.70 1285.11 Z M2535.11 1294.18 A13.0 13.0 0 0 1 2528.52 1287.59 L2534.10 1285.11 A6.9 6.9 0 0 0 2537.59 1288.60 Z M2528.52 1277.01 A13.0 13.0 0 0 1 2535.11 1270.42 L2537.59 1276.00 A6.9 6.9 0 0 0 2534.10 1279.49 Z M2545.69 1270.42 A13.0 13.0 0 0 1 2552.28 1277.01 L2546.70 1279.49 A6.9 6.9 0 0 0 2543.21 1276.00 Z" fill="#2f6fcf"/><g fill="#bdbdbd"><rect x="2531.3" y="1302.3" width="3.6" height="3.6"/><rect x="2538.4" y="1302.3" width="3.6" height="3.6"/><rect x="2545.6" y="1302.3" width="3.6" height="3.6"/><rect x="2531.3" y="1308.9" width="3.6" height="3.6"/><rect x="2538.4" y="1308.9" width="3.6" height="3.6"/><rect x="2545.6" y="1308.9" width="3.6" height="3.6"/></g></svg>
</div></body></html>
